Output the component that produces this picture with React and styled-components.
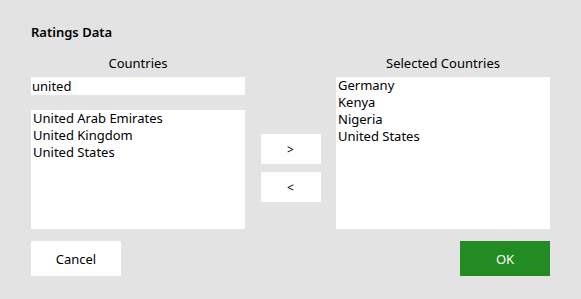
import React from "react";
import styled, { createGlobalStyle } from "styled-components";

const Global = createGlobalStyle`
  html, body { margin: 0; padding: 0; background: #e3e3e3; }
  body { font-family: "Noto Sans", "Open Sans", sans-serif; color: #000; }
`;

const Dialog = styled.div`
  width: 581px;
  height: 299px;
  box-sizing: border-box;
  padding: 23px 31px 0 31px;
  display: flex;
  flex-direction: column;
`;

const Title = styled.div`
  font-size: 13px;
  font-weight: 600;
  line-height: 18px;
  height: 18px;
`;

const Body = styled.div`
  margin-top: 16px;
  display: grid;
  grid-template-columns: 214px 1fr 214px;
  align-items: start;
`;

const Column = styled.div`
  display: flex;
  flex-direction: column;
`;

const Label = styled.div`
  font-size: 13px;
  line-height: 13px;
  height: 20px;
  text-align: center;
`;

const Search = styled.div`
  background: #fff;
  height: 18px;
  font-size: 13px;
  line-height: 18px;
  padding-left: 1px;
`;

const List = styled.div`
  background: #fff;
  height: ${(p) => p.$h}px;
  margin-top: ${(p) => p.$mt || 0}px;
  padding: 0 2px;
  box-sizing: border-box;
  font-size: 13px;
  line-height: 17px;
`;

const Middle = styled.div`
  display: flex;
  flex-direction: column;
  align-items: center;
  gap: 8px;
  padding-top: 77px;
`;

const MoveButton = styled.div`
  width: 60px;
  height: 30px;
  background: #fff;
  display: flex;
  align-items: center;
  justify-content: center;
  font-size: 12px;
`;

const Footer = styled.div`
  margin-top: 12px;
  display: flex;
  justify-content: space-between;
`;

const ActionButton = styled.div`
  width: 90px;
  height: 35px;
  display: flex;
  align-items: center;
  justify-content: center;
  font-size: 13px;
  background: ${(p) => (p.$primary ? "#228b22" : "#fff")};
  color: ${(p) => (p.$primary ? "#fff" : "#000")};
`;

export default function App() {
  const found = ["United Arab Emirates", "United Kingdom", "United States"];
  const selected = ["Germany", "Kenya", "Nigeria", "United States"];
  return (
    <>
      <Global />
      <Dialog>
        <Title>Ratings Data</Title>
        <Body>
          <Column>
            <Label>Countries</Label>
            <Search>united</Search>
            <List $h={119} $mt={15}>
              {found.map((c) => (
                <div key={c}>{c}</div>
              ))}
            </List>
          </Column>
          <Middle>
            <MoveButton>&gt;</MoveButton>
            <MoveButton>&lt;</MoveButton>
          </Middle>
          <Column>
            <Label>Selected Countries</Label>
            <List $h={152}>
              {selected.map((c) => (
                <div key={c}>{c}</div>
              ))}
            </List>
          </Column>
        </Body>
        <Footer>
          <ActionButton>Cancel</ActionButton>
          <ActionButton $primary>OK</ActionButton>
        </Footer>
      </Dialog>
    </>
  );
}
